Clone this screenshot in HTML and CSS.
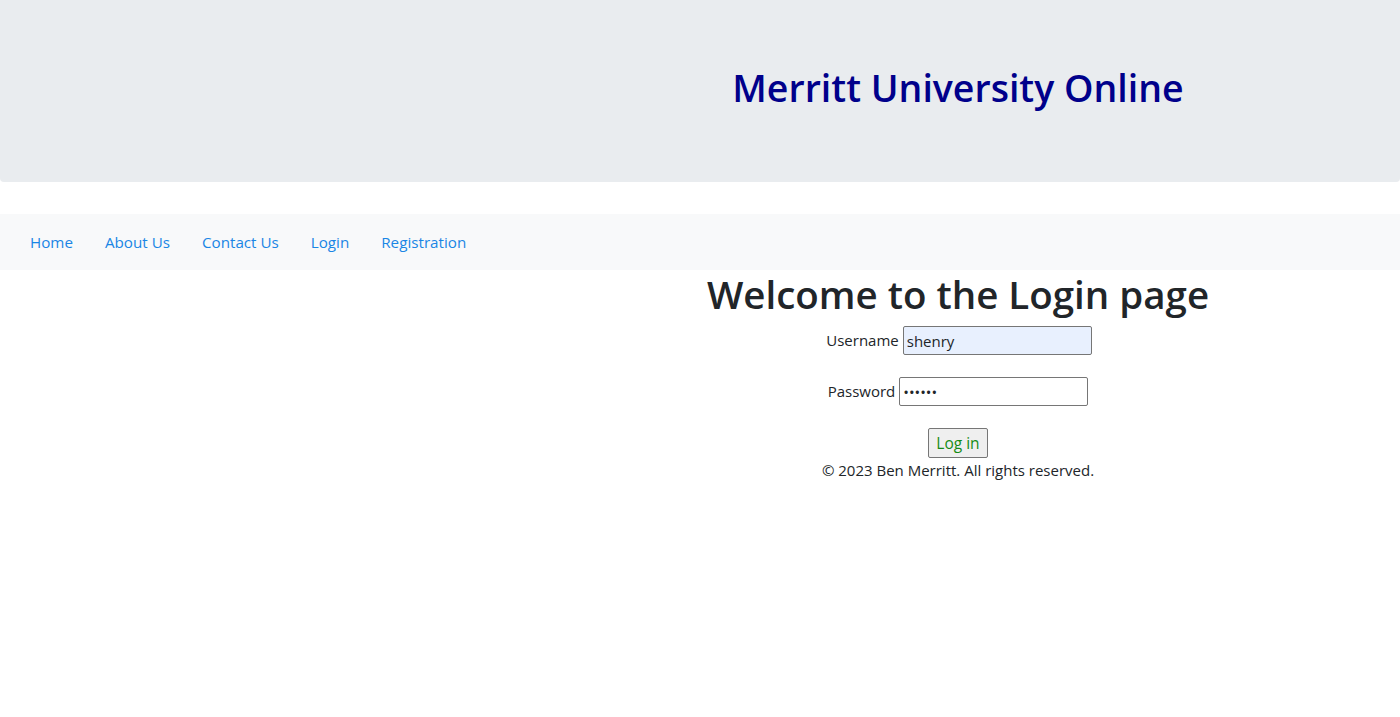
FILE: index.html
```html
<!DOCTYPE html>
<html lang="en">
<head>
<meta charset="utf-8">
<title>Login - Merritt University Online</title>
<link rel="stylesheet" href="styles.css">
</head>
<body>
<header class="banner">
  <div class="spacer"></div>
  <h1 class="site-title">Merritt University Online</h1>
</header>
<nav class="navbar">
  <a class="nav-link" href="#">Home</a>
  <a class="nav-link" href="#">About Us</a>
  <a class="nav-link" href="#">Contact Us</a>
  <a class="nav-link" href="#">Login</a>
  <a class="nav-link" href="#">Registration</a>
</nav>
<main class="main">
  <div class="spacer"></div>
  <div class="content">
    <h1 class="page-title">Welcome to the Login page</h1>
    <form class="login-form">
      <div class="row row-user">
        <label for="username">Username</label>
        <input id="username" class="field field-autofill" type="text" value="shenry">
      </div>
      <div class="row">
        <label for="password">Password</label>
        <input id="password" class="field" type="password" value="secret">
      </div>
      <div class="row">
        <button class="btn" type="button">Log in</button>
      </div>
    </form>
    <footer class="footer">© 2023 Ben Merritt. All rights reserved.</footer>
  </div>
</main>
</body>
</html>
```
FILE: styles.css
```css
* { box-sizing: border-box; }
html, body { margin: 0; padding: 0; }
body {
  font-family: "Open Sans", "Noto Sans", sans-serif;
  font-size: 16px;
  line-height: 1.5;
  color: #212529;
  background: #fff;
}
.banner {
  display: grid;
  grid-template-columns: 516px 1fr;
  height: 182px;
  background: #e9ecef;
  margin-bottom: 32px;
  border-radius: 0 0 4px 4px;
}
.site-title {
  margin: 0;
  padding-top: 64px;
  text-align: center;
  font-size: 37.5px;
  font-weight: 600;
  line-height: 48px;
  color: #00008b;
}
.navbar {
  display: flex;
  align-items: center;
  height: 56px;
  padding: 0 14px;
  background: #f8f9fa;
}
.nav-link {
  padding: 1px 16px 0;
  color: #1a86e5;
  text-decoration: none;
  font-size: 15.2px;
}
.main {
  display: grid;
  grid-template-columns: 516px 1fr;
}
.content {
  display: flex;
  flex-direction: column;
  align-items: center;
}
.page-title {
  margin: 0;
  margin-top: -3px;
  padding-top: 0;
  font-size: 38.5px;
  font-weight: 600;
  line-height: 55px;
}
.login-form {
  display: flex;
  flex-direction: column;
  align-items: center;
  gap: 22px;
  margin-top: 4px;
}
.row {
  display: flex;
  align-items: center;
  gap: 4px;
  height: 29px;
  font-size: 15px;
}
.row-user { transform: translateX(1px); }
.field {
  width: 189px;
  height: 29px;
  padding: 1px 3px;
  border: 1px solid #767676;
  border-radius: 2px;
  font-family: inherit;
  font-size: 15px;
  color: #212529;
  background: #fff;
}
.field-autofill { background: #e8f0fe; }
.btn {
  height: 30px;
  padding: 0 7px;
  border: 1px solid #767676;
  border-radius: 2px;
  background: #efefef;
  color: #158c15;
  font-family: inherit;
  font-size: 15.5px;
}
.footer {
  margin-top: 1px;
  font-size: 15px;
  line-height: 24px;
}
```
